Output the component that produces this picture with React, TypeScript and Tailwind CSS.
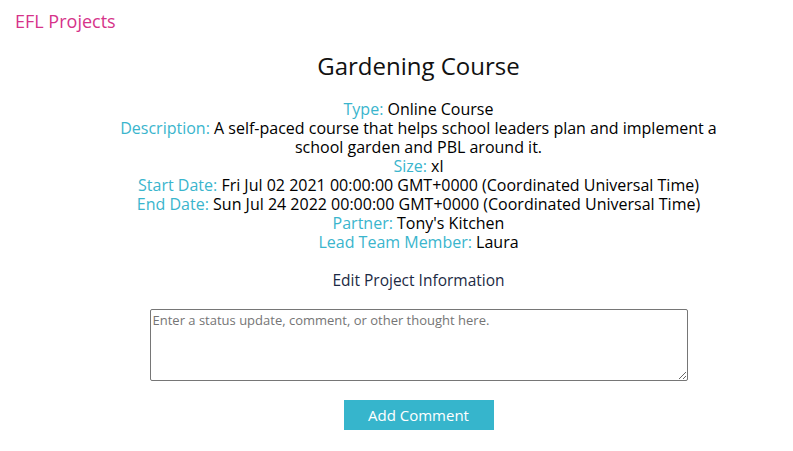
import React from "react";

const FONT = "font-['Open_Sans',sans-serif]";

const DETAILS: { label: string; value: string }[] = [
  { label: "Type", value: "Online Course" },
  {
    label: "Description",
    value:
      "A self-paced course that helps school leaders plan and implement a school garden and PBL around it.",
  },
  { label: "Size", value: "xl" },
  {
    label: "Start Date",
    value: "Fri Jul 02 2021 00:00:00 GMT+0000 (Coordinated Universal Time)",
  },
  {
    label: "End Date",
    value: "Sun Jul 24 2022 00:00:00 GMT+0000 (Coordinated Universal Time)",
  },
  { label: "Partner", value: "Tony's Kitchen" },
  { label: "Lead Team Member", value: "Laura" },
];

const App: React.FC = () => {
  return (
    <div className={`min-h-[451px] bg-white ${FONT}`}>
      {/* Nav */}
      <header className="px-[15px] pt-[8px]">
        <span className="text-[18px] leading-[26px] text-[#d6338a]">EFL Projects</span>
      </header>

      <main className="ml-[44px] flex flex-col items-center">
        <h1 className="mt-[16px] text-[24px] leading-[31px] text-[#111]">Gardening Course</h1>

        <div className="mt-[19px] w-[605px] text-center text-[16px] leading-[19px] text-black">
          {DETAILS.map((d) => (
            <p key={d.label}>
              <span className="text-[#3ab5cd]">{d.label}:</span> {d.value}
            </p>
          ))}
        </div>

        <h2 className="mt-[18px] text-[15.5px] leading-[20px] text-[#1c2a44]">
          Edit Project Information
        </h2>

        <textarea
          className="mt-[19px] h-[72px] w-[538px] rounded-[2px] border border-[#767676] px-[2px] py-[1px] text-[13px] text-black placeholder:text-[#757575]"
          placeholder="Enter a status update, comment, or other thought here."
        />

        <button className="mt-[19px] h-[30px] w-[150px] bg-[#36b5cc] text-[15px] text-white">
          Add Comment
        </button>
      </main>
    </div>
  );
};

export default App;
